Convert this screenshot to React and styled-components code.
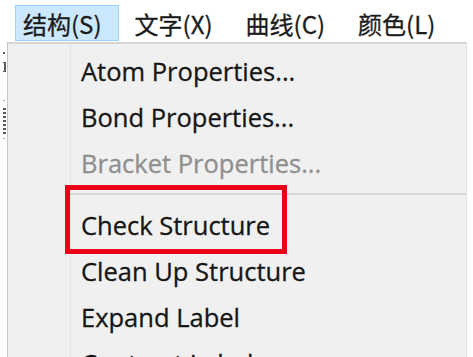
import React from 'react'
import styled, { createGlobalStyle } from 'styled-components'

const GlobalStyle = createGlobalStyle`
  html, body {
    margin: 0;
    padding: 0;
    background: #ffffff;
    overflow: hidden;
  }
`

const Screen = styled.div`
  width: 473px;
  height: 357px;
  overflow: hidden;
  background: #ffffff;
  display: flex;
  flex-direction: column;
`

const MenuBar = styled.div`
  height: 42px;
  box-sizing: border-box;
  padding: 5px 0 1px 15px;
  display: flex;
  gap: 8px;
  background: #ffffff;
`

const MenuTitle = styled.div`
  display: flex;
  align-items: center;
  padding: 0 16px 0 7px;
  box-sizing: border-box;
  font-family: "Noto Sans CJK SC", "Microsoft YaHei", sans-serif;
  font-size: 24px;
  color: #1b1b1b;
  -webkit-text-stroke: 0.3px #1b1b1b;
  border: 1px solid ${p => (p.active ? '#99d1ff' : 'transparent')};
  background: ${p => (p.active ? '#cce8ff' : 'transparent')};
`

const Body = styled.div`
  flex: 1;
  display: flex;
  min-height: 0;
`

const EdgeStrip = styled.div`
  width: 7px;
  flex: none;
  background: #ffffff;
  border-right: 1px solid #c4c4c4;
`

const Dropdown = styled.div`
  width: 459px;
  flex: none;
  box-sizing: border-box;
  padding-top: 4px;
  border-top: 2px solid #d6d6d6;
  border-right: 1px solid #e2e2e2;
  background:
    linear-gradient(to right, transparent 62px, #e4e4e4 62px, #e4e4e4 63px, transparent 63px),
    #f0f0f0;
  display: flex;
  flex-direction: column;
`

const Item = styled.div`
  position: relative;
  height: 46px;
  flex: none;
  padding-left: 73px;
  font-family: "Open Sans", "Noto Sans", sans-serif;
  font-size: 25.5px;
  line-height: 46px;
  white-space: nowrap;
  color: ${p => (p.disabled ? '#8f8f8f' : '#161616')};
  -webkit-text-stroke: 0.3px ${p => (p.disabled ? '#8f8f8f' : '#161616')};
`

const Separator = styled.div`
  height: 16px;
  flex: none;
  display: flex;
  align-items: center;
  padding-left: 62px;

  &::after {
    content: '';
    flex: 1;
    height: 2px;
    background: #d7d7d7;
  }
`

const Callout = styled.div`
  position: absolute;
  left: 57px;
  top: -17px;
  width: 222px;
  height: 69px;
  box-sizing: border-box;
  border: 5px solid #ea0019;
  pointer-events: none;
`

const Edge = () => (
  <EdgeStrip>
    <svg width="7" height="315" viewBox="0 0 7 315">
      <g fill="#5a5a5a">
        <rect x="3" y="10" width="2" height="2" />
        <rect x="3" y="20" width="3" height="1" />
        <rect x="4" y="21" width="2" height="8" />
        <rect x="3" y="29" width="3" height="1" />
        <rect x="3" y="58" width="2" height="1" opacity="0.5" />
        <rect x="3" y="66" width="3" height="2" />
        <rect x="3" y="70" width="3" height="2" />
        <rect x="3" y="74" width="3" height="2" />
        <rect x="3" y="78" width="3" height="2" />
        <rect x="3" y="82" width="3" height="2" />
        <rect x="3" y="86" width="3" height="2" />
        <rect x="3" y="90" width="3" height="2" />
        <rect x="3" y="96" width="2" height="1" opacity="0.5" />
      </g>
    </svg>
  </EdgeStrip>
)

const menus = [
  { label: '结构(S)', active: true },
  { label: '文字(X)' },
  { label: '曲线(C)' },
  { label: '颜色(L)' },
]

export default function App() {
  return (
    <Screen>
      <GlobalStyle />
      <MenuBar>
        {menus.map(m => (
          <MenuTitle key={m.label} active={m.active}>{m.label}</MenuTitle>
        ))}
      </MenuBar>
      <Body>
        <Edge />
        <Dropdown>
          <Item>Atom Properties...</Item>
          <Item>Bond Properties...</Item>
          <Item disabled>Bracket Properties...</Item>
          <Separator />
          <Item>
            Check Structure
            <Callout />
          </Item>
          <Item>Clean Up Structure</Item>
          <Item>Expand Label</Item>
          <Item>Contract Label</Item>
        </Dropdown>
      </Body>
    </Screen>
  )
}
